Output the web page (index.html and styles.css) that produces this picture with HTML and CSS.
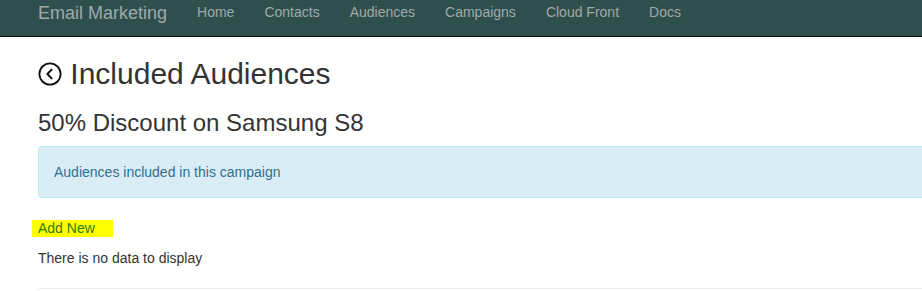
FILE: index.html
```html
<!DOCTYPE html>
<html lang="en">
<head>
    <meta charset="UTF-8">
    <meta name="viewport" content="width=device-width, initial-scale=1.0">
    <title>Included Audiences</title>
    <link rel="stylesheet" href="styles.css">
</head>
<body>
    <nav class="navbar">
        <a class="navbar-brand" href="#">Email Marketing</a>
        <ul class="nav">
            <li><a href="#">Home</a></li>
            <li><a href="#">Contacts</a></li>
            <li><a href="#">Audiences</a></li>
            <li><a href="#">Campaigns</a></li>
            <li><a href="#">Cloud Front</a></li>
            <li><a href="#">Docs</a></li>
        </ul>
    </nav>

    <div class="container">
        <h2 class="page-title">
            <a href="#" class="back-link">
                <svg width="24" height="24" viewBox="0 0 24 24">
                    <circle cx="12" cy="12" r="10.6" fill="none" stroke="#111" stroke-width="1.8"/>
                    <path d="M13.6 7.6 L9.4 12 L13.6 16.4" fill="none" stroke="#111" stroke-width="2" stroke-linecap="round" stroke-linejoin="round"/>
                </svg>
            </a>
            Included Audiences
        </h2>
        <h3>50% Discount on Samsung S8</h3>

        <div class="alert alert-info">Audiences included in this campaign</div>

        <p><a href="#" class="add-new">Add New</a></p>
        <p>There is no data to display</p>
        <hr>
    </div>
</body>
</html>
```

FILE: styles.css
```css
html, body {
    overflow: hidden;
}
body {
    margin: 0;
    font-family: "Liberation Sans", Arial, sans-serif;
    font-size: 14px;
    line-height: 20px;
    color: #333;
    background-color: #fff;
}
a {
    color: #337ab7;
    text-decoration: none;
}
.navbar {
    display: flex;
    align-items: flex-start;
    height: 36px;
    padding-left: 23px;
    background-color: #2f4f4f;
    border-bottom: 1px solid #0b1414;
    white-space: nowrap;
}
.navbar-brand {
    padding: 3px 15px 0;
    font-size: 18px;
    line-height: 20px;
    color: #9fa9a8;
}
.nav {
    display: flex;
    list-style: none;
    margin: 0;
    padding: 0;
}
.nav a {
    display: block;
    padding: 2px 15px 0;
    line-height: 20px;
    color: #9fa9a8;
}
.container {
    width: 1200px;
    padding-left: 38px;
}
h2, h3 {
    font-weight: 500;
    line-height: 1.1;
    margin: 20px 0 10px;
    color: #333;
}
h2 {
    font-size: 30px;
}
h3 {
    font-size: 24px;
}
.back-link svg {
    vertical-align: -2px;
}
.alert {
    padding: 15px;
    margin-bottom: 20px;
    border: 1px solid transparent;
    border-radius: 4px;
}
.alert-info {
    color: #31708f;
    background-color: #d9edf7;
    border-color: #bce8f1;
}
p {
    margin: 0 0 10px;
}
.add-new {
    display: inline-block;
    line-height: 17px;
    margin-left: -6px;
    padding: 0 18px 0 6px;
    background-color: #ffff00;
    color: #337a00;
}
hr {
    margin: 20px 0 0;
    border: 0;
    border-top: 1px solid #eee;
}
```
